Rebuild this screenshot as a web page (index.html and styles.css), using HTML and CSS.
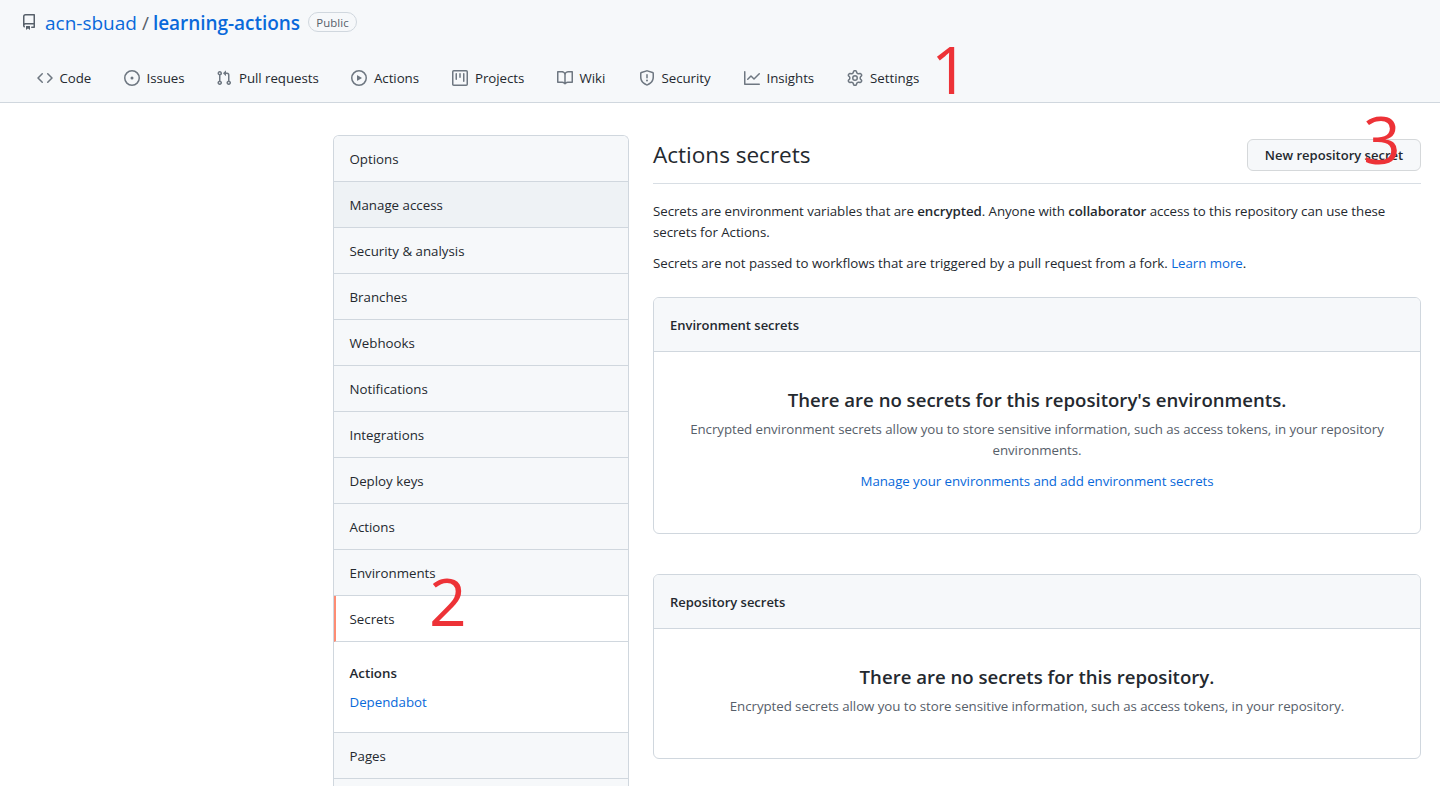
FILE: index.html
```html
<!DOCTYPE html>
<html lang="en">
<head>
<meta charset="utf-8">
<title>Actions secrets</title>
<link rel="stylesheet" href="styles.css">
</head>
<body>
<header class="header">
  <div class="repo">
    <svg class="repo-icon" viewBox="0 0 16 16"><path fill-rule="evenodd" d="M2 2.5A2.5 2.5 0 014.5 0h8.75a.75.75 0 01.75.75v12.5a.75.75 0 01-.75.75h-2.5a.75.75 0 110-1.5h1.75v-2h-8a1 1 0 00-.714 1.7.75.75 0 01-1.072 1.05A2.495 2.495 0 012 11.5v-9zm10.5-1V9h-8c-.356 0-.694.074-1 .208V2.5a1 1 0 011-1h8zM5 12.25v3.25a.25.25 0 00.4.2l1.45-1.087a.25.25 0 01.3 0L8.6 15.7a.25.25 0 00.4-.2v-3.25a.25.25 0 00-.25-.25h-3.5a.25.25 0 00-.25.25z"/></svg>
    <a class="owner">acn-sbuad</a><span class="slash">/</span><a class="name">learning-actions</a>
    <span class="label">Public</span>
  </div>
  <nav class="nav">
    <a class="tab tab-code"><svg viewBox="0 0 16 16"><path fill-rule="evenodd" d="M4.72 3.22a.75.75 0 011.06 1.06L2.06 8l3.72 3.72a.75.75 0 11-1.06 1.06L.47 8.53a.75.75 0 010-1.06l4.25-4.25zm6.56 0a.75.75 0 10-1.06 1.06L13.94 8l-3.72 3.72a.75.75 0 101.06 1.06l4.25-4.25a.75.75 0 000-1.06l-4.25-4.25z"/></svg>Code</a>
    <a class="tab tab-issues"><svg viewBox="0 0 16 16"><path d="M8 9.5a1.5 1.5 0 100-3 1.5 1.5 0 000 3z"/><path fill-rule="evenodd" d="M8 0a8 8 0 100 16A8 8 0 008 0zM1.5 8a6.5 6.5 0 1113 0 6.5 6.5 0 01-13 0z"/></svg>Issues</a>
    <a class="tab tab-pulls"><svg viewBox="0 0 16 16"><path fill-rule="evenodd" d="M7.177 3.073L9.573.677A.25.25 0 0110 .854v4.792a.25.25 0 01-.427.177L7.177 3.427a.25.25 0 010-.354zM3.75 2.5a.75.75 0 100 1.5.75.75 0 000-1.5zm-2.25.75a2.25 2.25 0 113 2.122v5.256a2.251 2.251 0 11-1.5 0V5.372A2.25 2.25 0 011.5 3.25zM11 2.5h-1V4h1a1 1 0 011 1v5.628a2.251 2.251 0 101.5 0V5A2.5 2.5 0 0011 2.5zm1 10.25a.75.75 0 111.5 0 .75.75 0 01-1.5 0zM3.75 12a.75.75 0 100 1.5.75.75 0 000-1.5z"/></svg>Pull requests</a>
    <a class="tab tab-actions"><svg viewBox="0 0 16 16"><path fill-rule="evenodd" d="M1.5 8a6.5 6.5 0 1113 0 6.5 6.5 0 01-13 0zM8 0a8 8 0 100 16A8 8 0 008 0zM6.379 5.227A.25.25 0 006 5.442v5.117a.25.25 0 00.379.214l4.264-2.559a.25.25 0 000-.428L6.379 5.227z"/></svg>Actions</a>
    <a class="tab tab-projects"><svg viewBox="0 0 16 16"><path fill-rule="evenodd" d="M1.75 0A1.75 1.75 0 000 1.75v12.5C0 15.216.784 16 1.75 16h12.5A1.75 1.75 0 0016 14.25V1.75A1.75 1.75 0 0014.25 0H1.75zM1.5 1.75a.25.25 0 01.25-.25h12.5a.25.25 0 01.25.25v12.5a.25.25 0 01-.25.25H1.75a.25.25 0 01-.25-.25V1.75zM11.75 3a.75.75 0 00-.75.75v7.5a.75.75 0 001.5 0v-7.5a.75.75 0 00-.75-.75zm-8.25.75a.75.75 0 011.5 0v5.5a.75.75 0 01-1.5 0v-5.5zM8 3a.75.75 0 00-.75.75v3.5a.75.75 0 001.5 0v-3.5A.75.75 0 008 3z"/></svg>Projects</a>
    <a class="tab tab-wiki"><svg viewBox="0 0 16 16"><path fill-rule="evenodd" d="M0 1.75A.75.75 0 01.75 1h4.253c1.227 0 2.317.59 3 1.501A3.744 3.744 0 0111.006 1h4.245a.75.75 0 01.75.75v10.5a.75.75 0 01-.75.75h-4.507a2.25 2.25 0 00-1.591.659l-.622.621a.75.75 0 01-1.06 0l-.622-.621A2.25 2.25 0 005.258 13H.75a.75.75 0 01-.75-.75V1.75zm8.755 3a2.25 2.25 0 012.25-2.25H14.5v9h-3.757c-.71 0-1.4.201-1.992.572l.004-7.322zm-1.504 7.324l.004-5.073-.002-2.253A2.25 2.25 0 005.003 2.5H1.5v9h3.757a3.75 3.75 0 011.994.574z"/></svg>Wiki</a>
    <a class="tab tab-security"><svg viewBox="0 0 16 16"><path fill-rule="evenodd" d="M7.467.133a1.75 1.75 0 011.066 0l5.25 1.68A1.75 1.75 0 0115 3.48V7c0 1.566-.32 3.182-1.303 4.682-.983 1.498-2.585 2.813-5.032 3.855a1.7 1.7 0 01-1.33 0c-2.447-1.042-4.049-2.357-5.032-3.855C1.32 10.182 1 8.566 1 7V3.48a1.75 1.75 0 011.217-1.667l5.25-1.68zm.61 1.429a.25.25 0 00-.153 0l-5.25 1.68a.25.25 0 00-.174.238V7c0 1.358.275 2.666 1.057 3.86.784 1.194 2.121 2.34 4.366 3.297a.2.2 0 00.154 0c2.245-.956 3.582-2.104 4.366-3.298C13.225 9.666 13.5 8.36 13.5 7V3.48a.25.25 0 00-.174-.237l-5.25-1.68zM9 10.5a1 1 0 11-2 0 1 1 0 012 0zm-.25-5.75a.75.75 0 10-1.5 0v3a.75.75 0 001.5 0v-3z"/></svg>Security</a>
    <a class="tab tab-insights"><svg viewBox="0 0 16 16"><path fill-rule="evenodd" d="M1.5 1.75a.75.75 0 00-1.5 0v12.5c0 .414.336.75.75.75h14.5a.75.75 0 000-1.5H1.5V1.75zm14.28 2.53a.75.75 0 00-1.06-1.06L10 7.94 7.53 5.47a.75.75 0 00-1.06 0L3.22 8.72a.75.75 0 001.06 1.06L7 7.06l2.47 2.47a.75.75 0 001.06 0l5.25-5.25z"/></svg>Insights</a>
    <a class="tab tab-settings"><svg viewBox="0 0 16 16"><path fill-rule="evenodd" d="M7.429 1.525a6.593 6.593 0 011.142 0c.036.003.108.036.137.146l.289 1.105c.147.56.55.967.997 1.189.174.086.341.183.501.29.417.278.97.423 1.53.27l1.102-.303c.11-.03.175.016.195.046.219.31.41.641.573.989.014.031.022.11-.059.19l-.815.806c-.411.406-.562.957-.53 1.456a4.588 4.588 0 010 .582c-.032.499.119 1.05.53 1.456l.815.806c.08.08.073.159.059.19a6.494 6.494 0 01-.573.99c-.02.029-.086.074-.195.045l-1.103-.303c-.559-.153-1.112-.008-1.529.27-.16.107-.327.204-.5.29-.449.222-.851.628-.998 1.189l-.289 1.105c-.029.11-.101.143-.137.146a6.613 6.613 0 01-1.142 0c-.036-.003-.108-.037-.137-.146l-.289-1.105c-.147-.56-.55-.967-.997-1.189a4.502 4.502 0 01-.501-.29c-.417-.278-.97-.423-1.53-.27l-1.102.303c-.11.03-.175-.016-.195-.046a6.492 6.492 0 01-.573-.989c-.014-.031-.022-.11.059-.19l.815-.806c.411-.406.562-.957.53-1.456a4.587 4.587 0 010-.582c.032-.499-.119-1.05-.53-1.456l-.815-.806c-.08-.08-.073-.159-.059-.19a6.44 6.44 0 01.573-.99c.02-.029.086-.075.195-.045l1.103.303c.559.153 1.112.008 1.529-.27.16-.107.327-.204.5-.29.449-.222.851-.628.998-1.189l.289-1.105c.029-.11.101-.143.137-.146zM8 0c-.236 0-.47.01-.701.03-.743.065-1.29.615-1.458 1.261l-.29 1.106c-.017.066-.078.158-.211.224a5.994 5.994 0 00-.668.386c-.123.082-.233.09-.3.071L3.27 2.776c-.644-.177-1.392.02-1.82.63a7.977 7.977 0 00-.704 1.217c-.315.675-.111 1.422.363 1.891l.815.806c.05.048.098.147.088.294a6.084 6.084 0 000 .772c.01.147-.038.246-.088.294l-.815.806c-.474.469-.678 1.216-.363 1.891.2.428.436.835.704 1.218.428.609 1.176.806 1.82.63l1.103-.303c.066-.019.176-.011.299.071.213.143.436.272.668.386.133.066.194.158.212.224l.289 1.106c.169.646.715 1.196 1.458 1.26a8.094 8.094 0 001.402 0c.743-.064 1.29-.614 1.458-1.26l.29-1.106c.017-.066.078-.158.211-.224a5.98 5.98 0 00.668-.386c.123-.082.233-.09.3-.071l1.102.302c.644.177 1.392-.02 1.82-.63.268-.382.505-.789.704-1.217.315-.675.111-1.422-.364-1.891l-.814-.806c-.05-.048-.098-.147-.088-.294a6.1 6.1 0 000-.772c-.01-.147.039-.246.088-.294l.814-.806c.475-.469.679-1.216.364-1.891a7.992 7.992 0 00-.704-1.218c-.428-.609-1.176-.806-1.82-.63l-1.103.303c-.066.019-.176.011-.299-.071a5.991 5.991 0 00-.668-.386c-.133-.066-.194-.158-.212-.224L10.16 1.29C9.99.645 9.444.095 8.701.031A8.094 8.094 0 008 0zm1.5 8a1.5 1.5 0 11-3 0 1.5 1.5 0 013 0zM11 8a3 3 0 11-6 0 3 3 0 016 0z"/></svg>Settings</a>
  </nav>
</header>
<div class="page">
  <aside class="menu">
    <a class="item">Options</a>
    <a class="item hover">Manage access</a>
    <a class="item">Security &amp; analysis</a>
    <a class="item">Branches</a>
    <a class="item">Webhooks</a>
    <a class="item">Notifications</a>
    <a class="item">Integrations</a>
    <a class="item">Deploy keys</a>
    <a class="item">Actions</a>
    <a class="item">Environments</a>
    <a class="item selected">Secrets</a>
    <div class="submenu"><a class="current">Actions</a><a class="link">Dependabot</a></div>
    <a class="item">Pages</a>
    <div class="item-edge"></div>
  </aside>
  <main class="main">
    <div class="subhead"><h1>Actions secrets</h1><button class="btn">New repository secret</button></div>
    <p class="intro">Secrets are environment variables that are <b>encrypted</b>. Anyone with <b>collaborator</b> access to this repository can use these<br>secrets for Actions.</p>
    <p class="note">Secrets are not passed to workflows that are triggered by a pull request from a fork. <a class="link">Learn more</a>.</p>
    <section class="box">
      <h2 class="box-head">Environment secrets</h2>
      <div class="blank">
        <h3>There are no secrets for this repository's environments.</h3>
        <p>Encrypted environment secrets allow you to store sensitive information, such as access tokens, in your repository<br>environments.</p>
        <a class="link manage">Manage your environments and add environment secrets</a>
      </div>
    </section>
    <section class="box">
      <h2 class="box-head">Repository secrets</h2>
      <div class="blank">
        <h3>There are no secrets for this repository.</h3>
        <p>Encrypted secrets allow you to store sensitive information, such as access tokens, in your repository.</p>
      </div>
    </section>
  </main>
</div>
<span class="mark mark-1">1</span>
<span class="mark mark-2">2</span>
<span class="mark mark-3">3</span>
</body>
</html>
```
FILE: styles.css
```css
* { box-sizing: border-box; }
body {
  margin: 0;
  height: 786px;
  overflow: hidden;
  position: relative;
  background: #fff;
  color: #24292f;
  font: 13.3px/21px "Open Sans", "Noto Sans", sans-serif;
}
h1, h2, h3, p { margin: 0; }
b { font-weight: 600; }
svg { display: block; fill: #6e7781; flex: none; width: 16px; height: 16px; }
.link { color: #0969da; }

.header { height: 103px; background: #f6f8fa; border-bottom: 1px solid #d0d7de; }
.repo { display: flex; align-items: center; height: 46px; padding-left: 21px; font-size: 19px; white-space: nowrap; }
.repo .repo-icon { fill: #57606a; margin: 0 8px 2px 0; }
.owner, .name { color: #0969da; }
.name { font-weight: 600; }
.slash { margin: 0 4px 0 5px; color: #57606a; }
.label { margin: 0 0 2px 8px; width: 49px; height: 20px; text-align: center; border: 1px solid #d0d7de; border-radius: 10px; font-size: 11.4px; line-height: 19px; font-weight: 500; color: #57606a; letter-spacing: 0.1px; }
.name { letter-spacing: -0.04px; }

.nav { display: flex; height: 64px; align-items: center; padding-left: 37px; }
.tab { display: flex; align-items: center; gap: 6.5px; white-space: nowrap; letter-spacing: -0.05px; }
.tab-code { width: 87px; }
.tab-issues { width: 92px; }
.tab-pulls { width: 135px; gap: 7px; }
.tab-actions { width: 101px; gap: 7px; }
.tab-projects { width: 105px; gap: 7px; }
.tab-wiki { width: 82px; }
.tab-security { width: 105px; }
.tab-insights { width: 103px; }
.tab-settings { gap: 7px; letter-spacing: 0; }

.page { display: flex; gap: 24px; height: 683px; overflow: hidden; padding: 32px 19px 0 333px; }
.menu { width: 296px; flex: none; border: 1px solid #d0d7de; border-bottom: 0; border-radius: 6px 6px 0 0; overflow: hidden; }
.item { display: block; height: 46px; padding: 13px 15.5px 11px; background: #f6f8fa; border-bottom: 1px solid #d0d7de; }
.item.hover { background: #eef2f5; }
.item.selected { background: #fff; border-left: 2px solid #fd8c73; padding-left: 13.5px; }
.item-edge { height: 7px; background: #f6f8fa; }
.submenu { display: flex; flex-direction: column; gap: 8px; height: 91px; padding: 21px 15.5px; border-bottom: 1px solid #d0d7de; }
.current { font-weight: 600; }

.main { flex: 1; min-width: 0; letter-spacing: -0.06px; }
.subhead { display: flex; justify-content: space-between; align-items: center; height: 49px; padding-bottom: 8px; border-bottom: 1px solid #d8dee4; }
.subhead h1 { font-size: 22.6px; line-height: 36px; font-weight: 400; letter-spacing: -0.03px; }
.btn { width: 174px; height: 32px; padding: 0; border: 1px solid #d5d8da; border-radius: 6px; background: #f6f8fa; color: #24292f; font: 600 13px/20px "Open Sans", "Noto Sans", sans-serif; white-space: nowrap; }
.intro { margin-top: 17px; white-space: nowrap; }
.note { margin-top: 10px; white-space: nowrap; letter-spacing: -0.045px; }
.box { margin-top: 23px; border: 1px solid #d0d7de; border-radius: 6px; overflow: hidden; }
.box + .box { margin-top: 40px; }
.box-head { height: 54px; padding: 17px 16px; border-bottom: 1px solid #d0d7de; background: #f6f8fa; font-size: 13px; line-height: 21px; font-weight: 600; letter-spacing: -0.02px; }
.blank { padding: 33px 0 41px; text-align: center; white-space: nowrap; }
.blank h3 { font-size: 18.6px; line-height: 30px; font-weight: 600; letter-spacing: 0; }
.blank p { margin-top: 4px; color: #57606a; }
.manage { display: block; margin-top: 10px; }

.mark { position: absolute; font-size: 66px; line-height: 66px; font-weight: 500; color: #ed3237; }
.mark-1 { left: 931px; top: 35px; }
.mark-2 { left: 429px; top: 567px; }
.mark-3 { left: 1363px; top: 105px; }
```
